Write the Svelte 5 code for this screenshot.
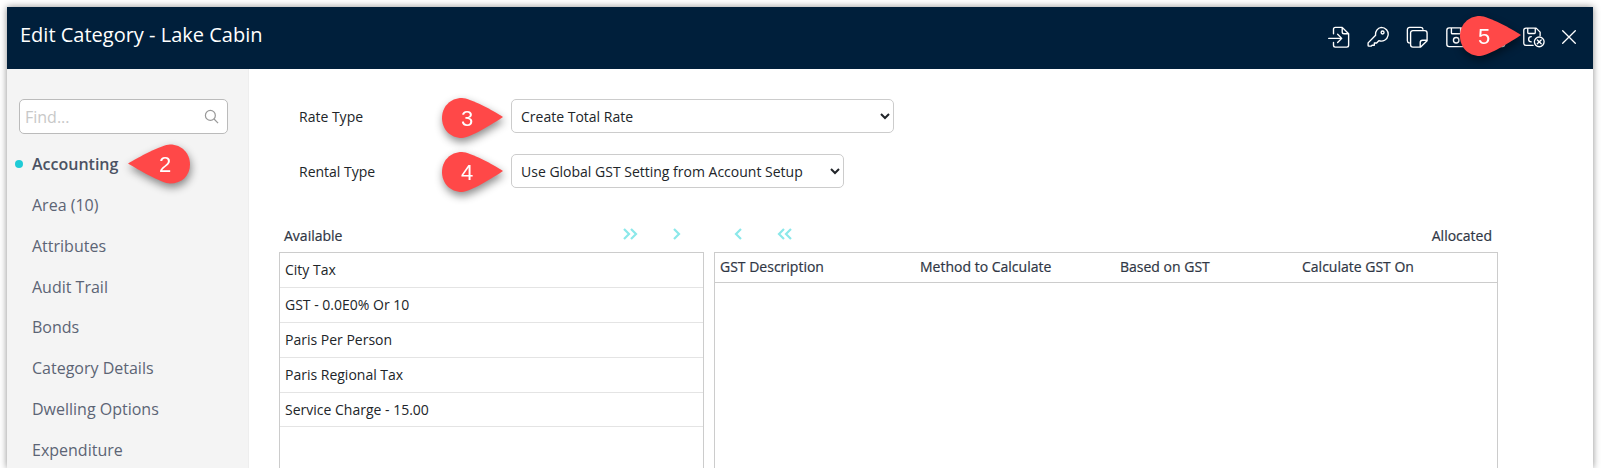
<script lang="ts">
    const navItems = [
        "Accounting",
        "Area (10)",
        "Attributes",
        "Audit Trail",
        "Bonds",
        "Category Details",
        "Dwelling Options",
        "Expenditure",
    ];
    const available = [
        "City Tax",
        "GST - 0.0E0% Or 10",
        "Paris Per Person",
        "Paris Regional Tax",
        "Service Charge - 15.00",
    ];
    const columns = ["GST Description", "Method to Calculate", "Based on GST", "Calculate GST On"];
    const pinRight = "M20 0C28 0 52 13 61 19C52 25 28 40 20 40C8 40 0 31 0 20C0 9 8 0 20 0Z";
    const pinLeft = "M42 0C34 0 10 13 0 19C10 25 34 39 42 39C54 39 62 31 62 20C62 9 54 0 42 0Z";
</script>

<div class="window">
    <header class="titlebar">
        <h1>Edit Category - Lake Cabin</h1>
        <div class="actions">
            <svg class="icon" viewBox="0 0 24 24"><path d="M6 8.500V3.500A2 2 0 0 1 8 1.500H15.500l7 7v12.500a2 2 0 0 1-2 2H8a2 2 0 0 1-2-2V18M15.500 1.500v5a2 2 0 0 0 2 2h5M.8 13.500h14M10.500 9l4.500 4.500-4.500 4.500" /></svg>
            <svg class="icon" viewBox="0 0 24 24"><path d="M15.500 1.500a7.500 7.500 0 1 1-2.600 14.500l-2.400 2.500H8v2.500H5.500l-1 1H2a.8.8 0 0 1-.8-.8v-2.800l8.200-8.400A7.500 7.500 0 0 1 15.500 1.500ZM17 5.500a1.600 1.600 0 1 0 0 3.200 1.600 1.600 0 0 0 0-3.200Z" /></svg>
            <svg class="icon" viewBox="0 0 24 24"><path d="M3.500 18.500A2.500 2.500 0 0 1 1.500 16V4a2.500 2.500 0 0 1 2.500-2.500h12A2.500 2.500 0 0 1 18.500 3.500M7.500 5h13A2.500 2.500 0 0 1 23 7.500V16l-7 7H7.500A2.500 2.500 0 0 1 5 20.500v-13A2.500 2.500 0 0 1 7.500 5ZM23 15.500h-5a2.500 2.500 0 0 0-2.500 2.500v5" /></svg>
            <svg class="icon" viewBox="0 0 24 24"><path d="M4.500 2h13l5 5v13a2.500 2.500 0 0 1-2.500 2.500H4.500A2.500 2.500 0 0 1 2 20V4.500A2.500 2.500 0 0 1 4.500 2ZM7 2v5.500a1 1 0 0 0 1 1h8a1 1 0 0 0 1-1V2M12.200 12.500a3 3 0 1 0 0 6 3 3 0 0 0 0-6Z" /></svg>
            <svg class="icon" viewBox="0 0 24 24"><path d="M4.500 2h13l5 5v13a2.500 2.500 0 0 1-2.500 2.500H4.500A2.500 2.500 0 0 1 2 20V4.500A2.500 2.500 0 0 1 4.500 2ZM7 2v5.500a1 1 0 0 0 1 1h8a1 1 0 0 0 1-1V2M12.200 12.500a3 3 0 1 0 0 6 3 3 0 0 0 0-6Z" /></svg>
            <svg class="icon saveclose" viewBox="0 0 26 24"><path d="M12.500 21.500H4.500A2.500 2.500 0 0 1 2 19V4.500A2.500 2.500 0 0 1 4.500 2h11.500l4.500 4.500v4M6.500 2v5a1 1 0 0 0 1 1h6.500a1 1 0 0 0 1-1V2M10.500 11.500a3 3 0 1 0 0 6" /><circle cx="19.500" cy="17.500" r="5.500" /><path d="M17.300 15.300l4.400 4.400M21.700 15.300l-4.400 4.400" /></svg>
            <svg class="icon close" viewBox="0 0 14 14"><path d="M.7.700l12.600 12.600M13.300.700.700 13.300" /></svg>
        </div>
    </header>

    <div class="body">
        <aside class="sidebar">
            <div class="find">
                <input type="text" placeholder="Find..." />
                <svg viewBox="0 0 16 16"><circle cx="6.800" cy="6.800" r="5.300" /><path d="M10.700 10.700l4.300 4.300" /></svg>
            </div>
            <ul>
                {#each navItems as item, i}
                    <li class:active={i === 0}>{item}</li>
                {/each}
            </ul>
        </aside>

        <main class="content">
            <div class="field">
                <label for="rate-type">Rate Type</label>
                <select id="rate-type" class="rate">
                    <option>Create Total Rate</option>
                </select>
            </div>
            <div class="field">
                <label for="rental-type">Rental Type</label>
                <select id="rental-type" class="rental">
                    <option>Use Global GST Setting from Account Setup</option>
                </select>
            </div>

            <div class="transfer-head">
                <span>Available</span>
                <div class="arrows">
                    <svg class="dbl" viewBox="0 0 15 12"><path d="M1 1l5 5-5 5M8 1l5 5-5 5" /></svg>
                    <svg class="sgl" viewBox="0 0 8 12"><path d="M1 1l5 5-5 5" /></svg>
                    <svg class="sgl" viewBox="0 0 8 12"><path d="M7 1L2 6l5 5" /></svg>
                    <svg class="dbl" viewBox="0 0 15 12"><path d="M7 1L2 6l5 5M14 1L9 6l5 5" /></svg>
                </div>
                <span>Allocated</span>
            </div>

            <div class="transfer">
                <div class="list">
                    {#each available as row}
                        <div class="row">{row}</div>
                    {/each}
                </div>
                <div class="table">
                    <div class="thead">
                        {#each columns as col}
                            <span>{col}</span>
                        {/each}
                    </div>
                </div>
            </div>
        </main>
    </div>

    <svg class="pin" style="left:121px;top:137px" width="62" height="40" viewBox="0 0 62 39"><path d={pinLeft} /><text x="37" y="27">2</text></svg>
    <svg class="pin" style="left:435px;top:91px" width="61" height="40" viewBox="0 0 61 40"><path d={pinRight} /><text x="25" y="28">3</text></svg>
    <svg class="pin" style="left:435px;top:145px" width="61" height="40" viewBox="0 0 61 40"><path d={pinRight} /><text x="25" y="28">4</text></svg>
    <svg class="pin" style="left:1453px;top:9px" width="61" height="40" viewBox="0 0 61 40"><path d={pinRight} /><text x="24" y="28">5</text></svg>
</div>

<style>
    :global(body) {
        margin: 0;
        background: #fff;
    }

    .window {
        position: relative;
        width: 1586px;
        height: 461px;
        margin: 7px 0 0 7px;
        overflow: hidden;
        background: #fff;
        box-shadow: 0 0 7px rgba(0, 0, 0, 0.45);
        font-family: "Open Sans", sans-serif;
        font-size: 14px;
        color: #212529;
    }

    .titlebar {
        height: 62px;
        box-sizing: border-box;
        display: flex;
        align-items: center;
        justify-content: space-between;
        padding: 0 17px 3px 13px;
        background: #001f3b;
        color: #fff;
    }

    h1 {
        margin: 0 0 5px;
        font-size: 20px;
        font-weight: 400;
    }

    .actions {
        display: flex;
        align-items: center;
        gap: 17px;
    }

    .icon {
        width: 22px;
        height: 22px;
        fill: none;
        stroke: #fff;
        stroke-width: 1.500;
        stroke-linecap: round;
        stroke-linejoin: round;
    }

    .saveclose {
        width: 23px;
        margin-left: -1px;
    }

    .close {
        width: 14px;
        height: 14px;
        stroke-width: 1.300;
    }

    .body {
        display: flex;
        height: 399px;
    }

    .sidebar {
        width: 242px;
        flex: none;
        padding: 30px 0 0 12px;
        box-sizing: border-box;
        background: #f4f4f4;
        border-right: 1px solid #eee;
    }

    .find {
        position: relative;
        width: 209px;
    }

    .find input {
        width: 100%;
        height: 35px;
        box-sizing: border-box;
        padding: 0 30px 0 5px;
        border: 1px solid #bbb;
        border-radius: 5px;
        background: #fff;
        font: 16px "Open Sans", sans-serif;
    }

    .find input::placeholder {
        color: #c8c8c8;
    }

    .find svg {
        position: absolute;
        right: 9px;
        top: 10px;
        width: 15px;
        height: 15px;
        fill: none;
        stroke: #999;
        stroke-width: 1.300;
    }

    ul {
        list-style: none;
        margin: 10px 0 0;
        padding: 0 0 0 13px;
    }

    li {
        position: relative;
        height: 40.850px;
        line-height: 40px;
        font-size: 16px;
        color: #5c6475;
        white-space: nowrap;
    }

    li.active {
        font-weight: 600;
        color: #4b5263;
    }

    li.active::before {
        content: "";
        position: absolute;
        left: -17px;
        top: 16px;
        width: 8px;
        height: 8px;
        border-radius: 50%;
        background: #1fcbd6;
    }

    .content {
        flex: 1;
        padding: 30px 96px 0 30px;
        min-width: 0;
    }

    .field {
        display: flex;
        align-items: center;
        height: 34px;
        margin-bottom: 21px;
        padding-left: 20px;
    }

    label {
        width: 212px;
        flex: none;
    }

    select {
        height: 34px;
        padding: 0 5px;
        border: 1px solid #ccc;
        border-radius: 5px;
        background: #fff;
        color: #212529;
        font: 14px "Open Sans", sans-serif;
    }

    select.rate {
        width: 383px;
    }

    select.rental {
        width: 333px;
    }

    .transfer-head {
        position: relative;
        display: flex;
        align-items: center;
        justify-content: space-between;
        height: 20px;
        margin-top: 37px;
        padding: 0 5px;
        color: #2f3644;
        -webkit-text-stroke: 0.2px #2f3644;
    }

    .arrows {
        position: absolute;
        left: 344px;
        top: -1px;
        display: flex;
        align-items: center;
        height: 20px;
    }

    .arrows svg {
        height: 12px;
        fill: none;
        stroke: #8be8ea;
        stroke-width: 2.200;
    }

    .dbl {
        width: 15px;
    }

    .sgl {
        width: 8px;
        margin: 0 35px;
    }

    .arrows .sgl + .sgl {
        margin-left: 18px;
    }

    .transfer {
        display: flex;
        gap: 10px;
        margin-top: 7px;
    }

    .list,
    .table {
        flex: none;
        box-sizing: border-box;
        height: 260px;
        border: 1px solid #ccc;
    }

    .list {
        width: 425px;
    }

    .table {
        width: 784px;
    }

    .row {
        height: 34.900px;
        line-height: 33px;
        box-sizing: border-box;
        padding-left: 5px;
        border-bottom: 1px solid #e4e4e4;
    }

    .thead {
        display: grid;
        grid-template-columns: 200px 200px 182px 1fr;
        height: 29px;
        line-height: 28px;
        padding-left: 5px;
        border-bottom: 1px solid #ccc;
        color: #2f3644;
        -webkit-text-stroke: 0.2px #2f3644;
    }

    .pin {
        position: absolute;
        overflow: visible;
        filter: drop-shadow(1px 4px 4px rgba(0, 0, 0, 0.45));
    }

    .pin path {
        fill: #ff4848;
    }

    .pin text {
        fill: #fff;
        font: 22px "Liberation Sans", sans-serif;
        text-anchor: middle;
    }
</style>
